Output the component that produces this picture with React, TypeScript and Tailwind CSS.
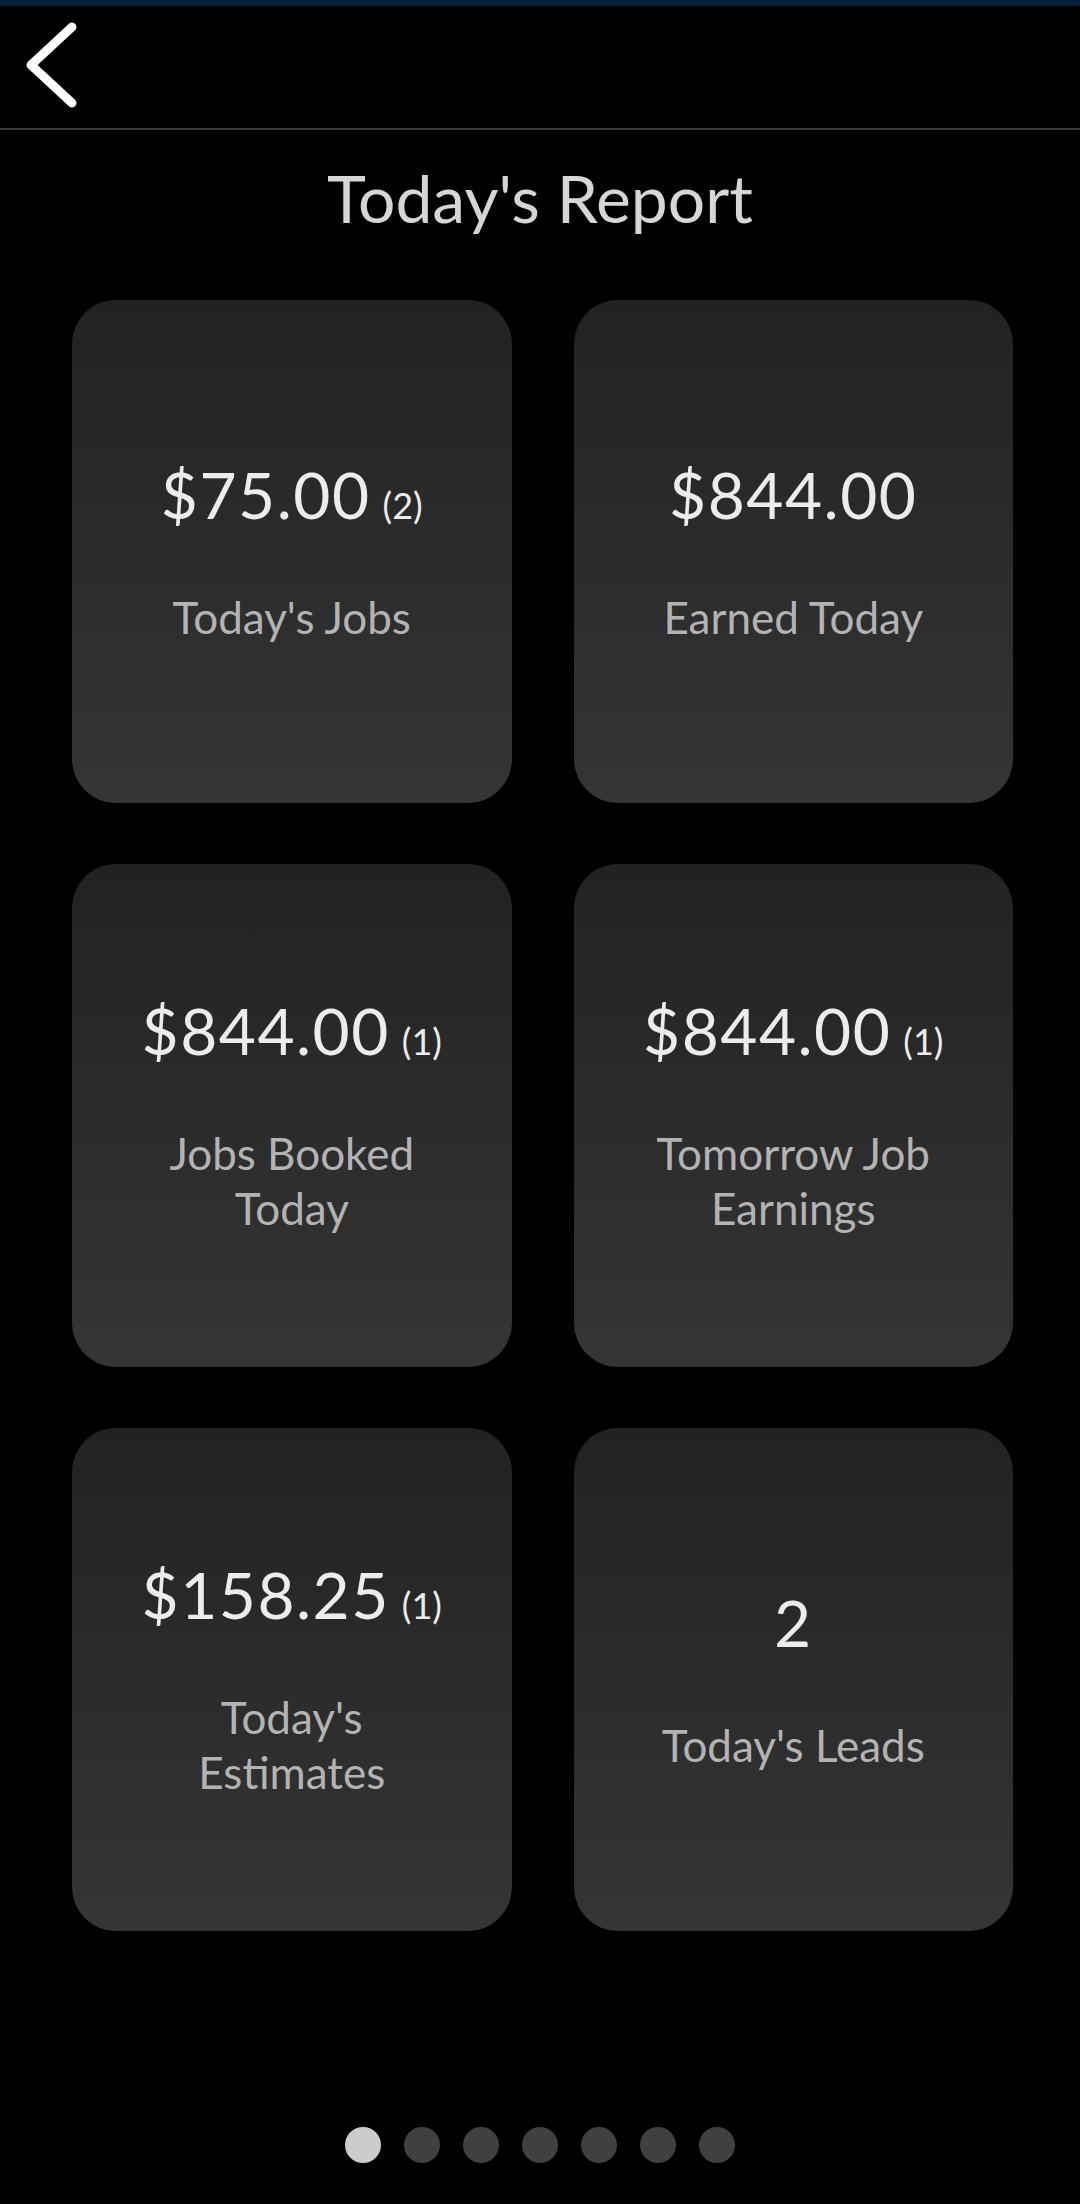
import React from 'react';

interface Stat {
    value: string;
    count?: number;
    label: string;
}

const stats: Stat[] = [
    { value: '$75.00', count: 2, label: "Today's Jobs" },
    { value: '$844.00', label: 'Earned Today' },
    { value: '$844.00', count: 1, label: 'Jobs Booked Today' },
    { value: '$844.00', count: 1, label: 'Tomorrow Job Earnings' },
    { value: '$158.25', count: 1, label: "Today's Estimates" },
    { value: '2', label: "Today's Leads" },
];

const StatCard: React.FC<{ stat: Stat }> = ({ stat }) => (
    <div className="h-[503px] rounded-[44px] bg-gradient-to-b from-[#222222] to-[#353535] flex flex-col items-center justify-center px-10 text-center">
        <div className="text-[64px] leading-[72px] tracking-[1.5px] text-[#ececec] whitespace-nowrap">
            {stat.value}
            {stat.count !== undefined && (
                <span className="ml-[12px] text-[36px] leading-none tracking-normal">({stat.count})</span>
            )}
        </div>
        <div className="mt-[59px] text-[44px] leading-[55px] text-[#b3b3b3] max-w-[300px]">{stat.label}</div>
    </div>
);

export default function App() {
    return (
        <div className="min-h-screen w-[1080px] bg-black font-['Lato','Open_Sans',sans-serif]">
            <div className="h-[6px] bg-[#00233b]" />
            <div className="h-[122px] flex items-start">
                <button className="ml-[20px] mt-[14px] w-[64px] h-[94px]">
                    <svg width="64" height="94" viewBox="0 0 64 94" fill="none">
                        <polyline
                            points="52,7 11,45 52,83"
                            stroke="white"
                            strokeWidth="9"
                            strokeLinecap="round"
                            strokeLinejoin="round"
                        />
                    </svg>
                </button>
            </div>
            <div className="h-[2px] bg-[#3d3d3d]" />

            <h1 className="mt-[28px] text-center text-[66px] leading-[80px] text-[#d6d6d6]">Today's Report</h1>

            <div className="mt-[62px] grid grid-cols-2 gap-x-[62px] gap-y-[61px] pl-[72px] pr-[67px]">
                {stats.map((s, i) => (
                    <StatCard key={i} stat={s} />
                ))}
            </div>

            <div className="mt-[196px] flex justify-center gap-[23px] pb-[43px]">
                {[0, 1, 2, 3, 4, 5, 6].map((d) => (
                    <span
                        key={d}
                        className={d === 0 ? 'w-9 h-9 rounded-full bg-[#cccccc]' : 'w-9 h-9 rounded-full bg-[#404040]'}
                    />
                ))}
            </div>
        </div>
    );
}
